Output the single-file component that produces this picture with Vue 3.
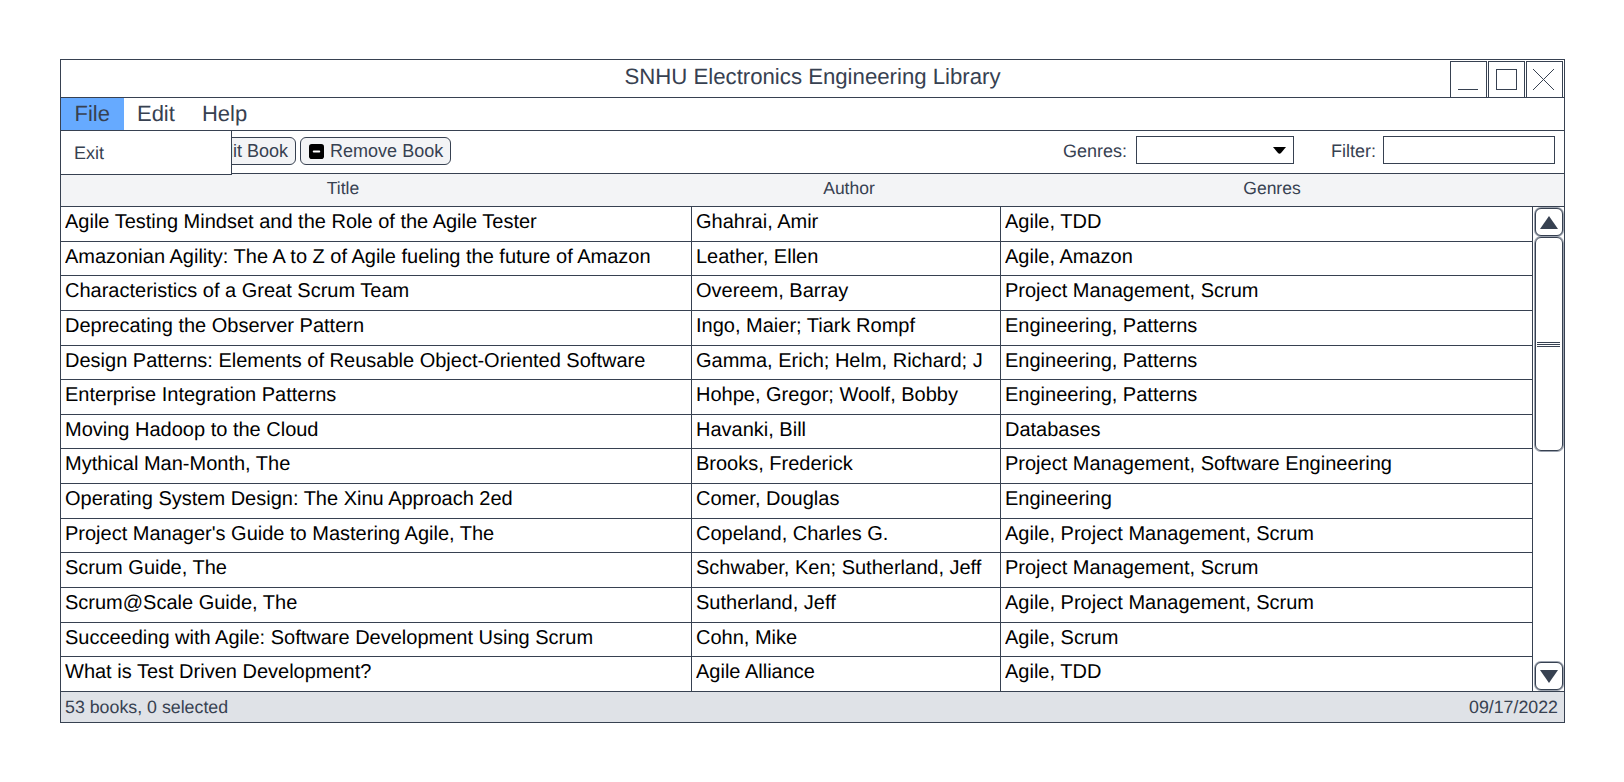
<template>
  <div class="page">
    <div class="window">
      <div class="titlebar">
        <span class="title">SNHU Electronics Engineering Library</span>
        <div class="win-buttons">
          <button class="win-btn">
            <svg width="35" height="35" viewBox="0 0 35 35"><path d="M7 27.500H27" /></svg>
          </button>
          <button class="win-btn">
            <svg width="35" height="35" viewBox="0 0 35 35"><rect x="7.500" y="7.500" width="20" height="20" /></svg>
          </button>
          <button class="win-btn">
            <svg width="35" height="35" viewBox="0 0 35 35"><path d="M6 7L27 28M27 7L6 28" /></svg>
          </button>
        </div>
      </div>

      <div class="menubar">
        <div class="menu-item active">File</div>
        <div class="menu-item">Edit</div>
        <div class="menu-item">Help</div>
        <div class="dropdown"><span>Exit</span></div>
      </div>

      <div class="toolbar">
        <button class="tool-btn">
          <svg class="tool-icon" viewBox="0 0 16 16"><rect width="16" height="16" rx="3" /><path d="M8 4.500v7M4.500 8h7" /></svg>
          Add Book
        </button>
        <button class="tool-btn">
          <svg class="tool-icon" viewBox="0 0 16 16"><rect width="16" height="16" rx="3" /><path d="M4.500 11.500l7-7" /></svg>
          Edit Book
        </button>
        <button class="tool-btn">
          <svg class="tool-icon" viewBox="0 0 16 16"><rect width="16" height="16" rx="3" /><path d="M5 8h6" /></svg>
          Remove Book
        </button>
        <div class="spacer"></div>
        <label class="field-label">Genres:</label>
        <div class="select">
          <svg width="13" height="7" viewBox="0 0 13 7"><path class="caret" d="M0 0H13L8 6Q6.500 7.500 5 6Z" /></svg>
        </div>
        <label class="field-label filter-label">Filter:</label>
        <div class="input"></div>
      </div>

      <div class="header">
        <div>Title</div>
        <div>Author</div>
        <div>Genres</div>
      </div>

      <div class="body">
        <div class="rows">
          <div v-for="book in books" :key="book.title" class="row">
            <div class="cell"><div class="cell-text">{{ book.title }}</div></div>
            <div class="cell"><div class="cell-text">{{ book.author }}</div></div>
            <div class="cell"><div class="cell-text">{{ book.genres }}</div></div>
          </div>
        </div>
        <div class="scrollbar">
          <button class="arrow">
            <svg width="18" height="13" viewBox="0 0 18 13"><path d="M9 0L18 13H0Z" /></svg>
          </button>
          <div class="thumb"><div class="grip"></div></div>
          <div class="track"></div>
          <button class="arrow">
            <svg width="18" height="13" viewBox="0 0 18 13"><path d="M0 0H18L9 13Z" /></svg>
          </button>
        </div>
      </div>

      <div class="statusbar">
        <span>53 books, 0 selected</span>
        <span>09/17/2022</span>
      </div>
    </div>
  </div>
</template>

<script setup>
const books = [
  { title: 'Agile Testing Mindset and the Role of the Agile Tester', author: 'Ghahrai, Amir', genres: 'Agile, TDD' },
  { title: 'Amazonian Agility: The A to Z of Agile fueling the future of Amazon', author: 'Leather, Ellen', genres: 'Agile, Amazon' },
  { title: 'Characteristics of a Great Scrum Team', author: 'Overeem, Barray', genres: 'Project Management, Scrum' },
  { title: 'Deprecating the Observer Pattern', author: 'Ingo, Maier; Tiark Rompf', genres: 'Engineering, Patterns' },
  { title: 'Design Patterns: Elements of Reusable Object-Oriented Software', author: 'Gamma, Erich; Helm, Richard; J', genres: 'Engineering, Patterns' },
  { title: 'Enterprise Integration Patterns', author: 'Hohpe, Gregor; Woolf, Bobby', genres: 'Engineering, Patterns' },
  { title: 'Moving Hadoop to the Cloud', author: 'Havanki, Bill', genres: 'Databases' },
  { title: 'Mythical Man-Month, The', author: 'Brooks, Frederick', genres: 'Project Management, Software Engineering' },
  { title: 'Operating System Design: The Xinu Approach 2ed', author: 'Comer, Douglas', genres: 'Engineering' },
  { title: "Project Manager's Guide to Mastering Agile, The", author: 'Copeland, Charles G.', genres: 'Agile, Project Management, Scrum' },
  { title: 'Scrum Guide, The', author: 'Schwaber, Ken; Sutherland, Jeff', genres: 'Project Management, Scrum' },
  { title: 'Scrum@Scale Guide, The', author: 'Sutherland, Jeff', genres: 'Agile, Project Management, Scrum' },
  { title: 'Succeeding with Agile: Software Development Using Scrum', author: 'Cohn, Mike', genres: 'Agile, Scrum' },
  { title: 'What is Test Driven Development?', author: 'Agile Alliance', genres: 'Agile, TDD' }
];
</script>

<style>
body {
  background: #fff;
}
</style>

<style scoped>
.page {
  padding: 59px 59px 0 60px;
  font-family: "Liberation Sans", Arial, sans-serif;
  color: #374151;
  text-rendering: geometricPrecision;
}

.window {
  border: 1px solid #374151;
  display: flex;
  flex-direction: column;
}

.titlebar {
  height: 37px;
  position: relative;
  display: flex;
  align-items: center;
  justify-content: center;
  border-bottom: 1px solid #374151;
  font-size: 22.200px;
}

.title {
  margin-top: -3px;
}

.win-buttons {
  position: absolute;
  right: 1px;
  top: 1px;
  bottom: 0;
  display: flex;
  gap: 1px;
}

.win-btn {
  width: 37px;
  padding: 0;
  background: #fff;
  border: 1px solid #374151;
  border-bottom: none;
}

.win-btn svg {
  display: block;
  fill: none;
  stroke: #374151;
  stroke-width: 1;
}

.menubar {
  height: 32px;
  position: relative;
  display: flex;
  border-bottom: 1px solid #374151;
  font-size: 22px;
}

.menu-item {
  padding: 0 13.500px;
  line-height: 32px;
}

.menu-item.active {
  background: #66aaff;
  padding-right: 14.500px;
  margin-right: -1px;
}

.dropdown {
  position: absolute;
  left: -1px;
  top: 32px;
  width: 170px;
  height: 43px;
  background: #fff;
  border: 1px solid #374151;
  z-index: 2;
  font-size: 18px;
  display: flex;
  align-items: center;
}

.dropdown span {
  padding: 1px 0 0 13px;
}

.toolbar {
  height: 42px;
  display: flex;
  align-items: center;
  gap: 4px;
  padding: 0 9px 0 0;
  border-bottom: 1px solid #374151;
  font-size: 18px;
}

.tool-btn {
  height: 28px;
  margin-top: -2px;
  display: flex;
  align-items: center;
  gap: 6px;
  padding: 0 7px 0 8px;
  background: #f3f4f6;
  border: 1px solid #374151;
  border-radius: 6px;
  font: inherit;
  color: inherit;
}

.tool-icon {
  width: 15px;
  height: 15px;
  fill: #000;
  stroke: #fff;
  stroke-width: 2;
  stroke-linecap: round;
}

.tool-icon rect {
  stroke: none;
}

.spacer {
  flex: 1;
}

.field-label {
  margin-top: -2px;
  margin-right: 5px;
}

.filter-label {
  margin-left: 33px;
  margin-right: 3px;
}

.select {
  width: 158px;
  height: 28px;
  margin-top: -4px;
  border: 1px solid #374151;
  display: flex;
  align-items: center;
  justify-content: flex-end;
  padding: 0 7px 0 0;
  box-sizing: border-box;
}

.caret {
  fill: #000;
}

.input {
  width: 172px;
  height: 28px;
  margin-top: -4px;
  border: 1px solid #374151;
  box-sizing: border-box;
}

.header {
  height: 29px;
  padding-bottom: 3px;
  display: grid;
  grid-template-columns: 564px 448px 398px;
  align-items: center;
  text-align: center;
  background: #f3f4f6;
  border-bottom: 1px solid #374151;
  font-size: 17.500px;
}

.body {
  display: flex;
  height: 484px;
  overflow: hidden;
}

.rows {
  flex: 1;
  min-width: 0;
}

.row {
  height: 34.640px;
  box-sizing: border-box;
  display: grid;
  grid-template-columns: 630px 309px 1fr;
  border-bottom: 1px solid #374151;
  color: #000;
  font-size: 20px;
}

.row:last-child {
  border-bottom: none;
}

.cell {
  padding: 0 4px;
  line-height: 31px;
  min-width: 0;
}

.cell-text {
  white-space: nowrap;
  overflow: hidden;
}

.cell + .cell {
  border-left: 1px solid #374151;
}

.scrollbar {
  width: 31px;
  display: flex;
  flex-direction: column;
  align-items: center;
  border-left: 1px solid #374151;
}

.arrow {
  width: 28px;
  height: 28px;
  flex: none;
  padding: 0;
  margin: 1px 0;
  display: flex;
  align-items: center;
  justify-content: center;
  background: #fff;
  border: 1px solid #374151;
  border-radius: 6px;
  box-shadow: 0 0 0 1px #9ca3af;
}

.arrow svg {
  fill: #374151;
}

.thumb {
  width: 28px;
  height: 214px;
  flex: none;
  display: flex;
  align-items: center;
  justify-content: center;
  border: 1px solid #374151;
  border-radius: 6px;
  box-shadow: 0 0 0 1px #9ca3af;
  box-sizing: border-box;
}

.grip {
  width: 23px;
  height: 5px;
  box-sizing: border-box;
  border-top: 1px solid #374151;
  border-bottom: 1px solid #374151;
  background: linear-gradient(#374151, #374151) center / 100% 1px no-repeat;
}

.track {
  flex: 1;
}

.statusbar {
  height: 29px;
  display: flex;
  align-items: center;
  justify-content: space-between;
  padding: 1px 6px 0 4px;
  background: #dfe2e7;
  border-top: 1px solid #374151;
  font-size: 17.800px;
}
</style>
